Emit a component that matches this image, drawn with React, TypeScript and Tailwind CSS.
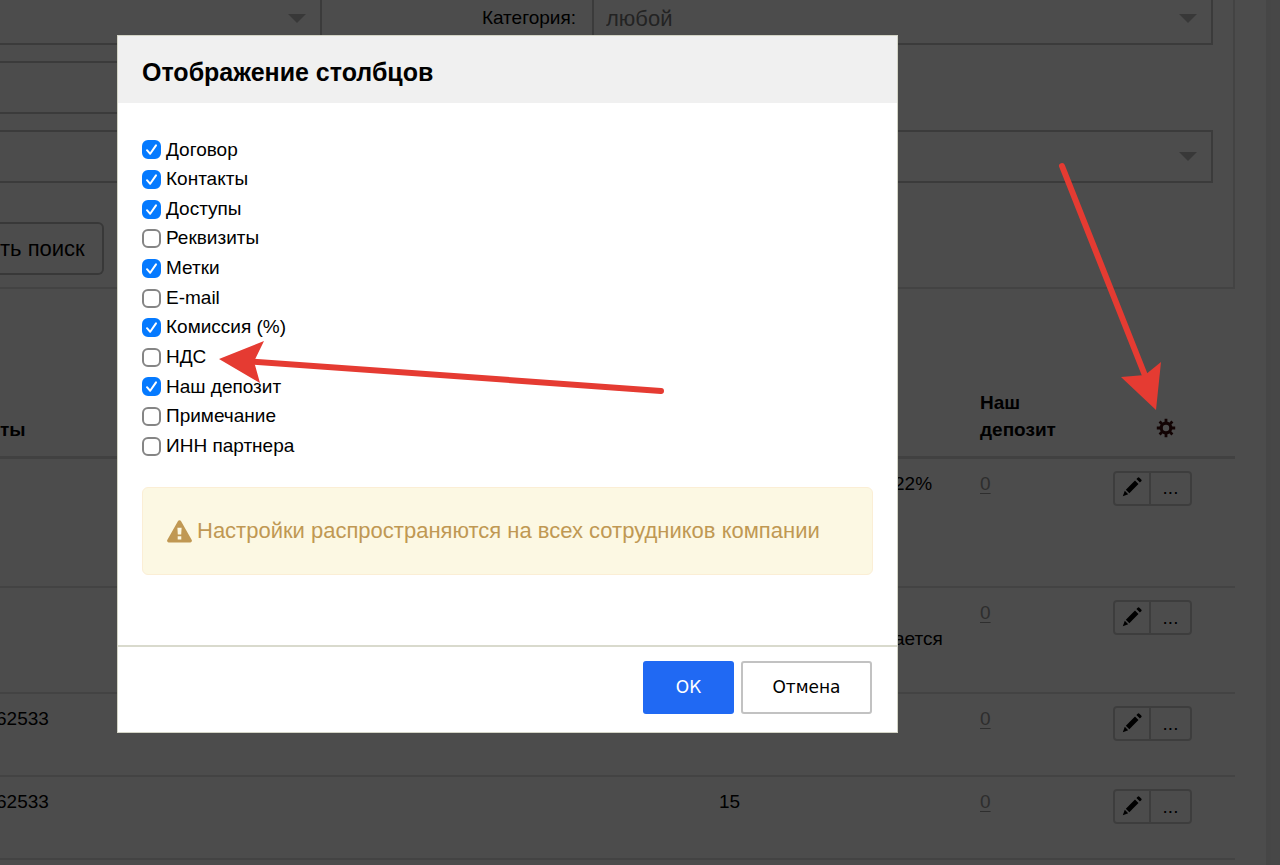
import { useState } from "react";
import type { ReactNode } from "react";

type Column = { id: string; label: string; checked: boolean };

const COLUMNS: Column[] = [
  { id: "contract", label: "Договор", checked: true },
  { id: "contacts", label: "Контакты", checked: true },
  { id: "access", label: "Доступы", checked: true },
  { id: "details", label: "Реквизиты", checked: false },
  { id: "tags", label: "Метки", checked: true },
  { id: "email", label: "E-mail", checked: false },
  { id: "commission", label: "Комиссия (%)", checked: true },
  { id: "vat", label: "НДС", checked: false },
  { id: "deposit", label: "Наш депозит", checked: true },
  { id: "note", label: "Примечание", checked: false },
  { id: "inn", label: "ИНН партнера", checked: false },
];

type Row = { phone: string; rate: string; note: string[]; height: string };

const ROWS: Row[] = [
  { phone: "", rate: "", note: ["22%"], height: "h-[130px]" },
  { phone: "", rate: "", note: ["", "ается"], height: "h-[106px]" },
  { phone: "62533", rate: "", note: [], height: "h-[83px]" },
  { phone: "62533", rate: "15", note: [], height: "h-[83px]" },
];

function PencilIcon() {
  return (
    <svg viewBox="0 0 20 20" className="size-5" fill="currentColor" aria-hidden="true">
      <path d="M14.400 2.100 15.700.8a1.200 1.200 0 0 1 1.700 0l1.800 1.800a1.200 1.200 0 0 1 0 1.700l-1.300 1.300z" />
      <path d="M13 3.500 16.500 7 7.300 16.200 3.800 12.700z" />
      <path d="M2.800 13.800 6.200 17.200.8 19.200z" />
    </svg>
  );
}

function GearIcon() {
  return (
    <svg viewBox="0 0 20 20" className="size-5" fill="none" stroke="currentColor" aria-hidden="true">
      <circle cx="10" cy="10" r="4.800" strokeWidth="3.200" />
      <path
        d="M10 .8v4M10 15.200v4M.8 10h4M15.200 10h4M3.600 3.600l2.600 2.600M13.800 13.800l2.600 2.600M3.600 16.400l2.600-2.600M13.800 6.200l2.600-2.600"
        strokeWidth="2.800"
      />
    </svg>
  );
}

function WarningIcon() {
  return (
    <svg viewBox="0 0 25 23" className="h-[23px] w-[25px] shrink-0" aria-hidden="true">
      <path
        fill="currentColor"
        fillRule="evenodd"
        d="M10.9 1.2a1.9 1.9 0 0 1 3.2 0l10.5 18.5a1.8 1.8 0 0 1-1.6 2.8H2a1.8 1.8 0 0 1-1.6-2.8zM10.4 7.7l.4 6.9h3.4l.4-6.9zM10.7 16.2v3.2h3.6v-3.2z"
      />
    </svg>
  );
}

function Caret() {
  return (
    <svg viewBox="0 0 18 9" className="h-[9px] w-[18px] shrink-0 text-[#bdbdbd]" fill="currentColor" aria-hidden="true">
      <path d="M0 0h18L9 9z" />
    </svg>
  );
}

function SelectBox({ label, value, className }: { label: string; value: string; className: string }) {
  return (
    <div className={`flex items-center border-[#c6c6c6] pr-[14px] pl-3 ${className}`}>
      <select aria-label={label} className="w-full flex-1 appearance-none bg-transparent text-[22px] text-[#777] outline-none">
        <option>{value}</option>
      </select>
      <Caret />
    </div>
  );
}

function Th({ children, className = "" }: { children?: ReactNode; className?: string }) {
  return <th className={`pb-[13px] text-left align-bottom font-bold ${className}`}>{children}</th>;
}

function PartnersPage() {
  return (
    <div className="mr-[14px] min-h-screen bg-white pr-[31px]">
      <form className="border-r-2 border-b-2 border-[#e2e2e2] pr-[20px] pb-3">
        <div className="flex">
          <SelectBox label="Статус" value="" className="h-[45px] w-[322px] border-r-2 border-b-2 pb-1.5" />
          <label className="flex flex-1 items-center justify-end pr-4 pb-2">Категория:</label>
          <SelectBox label="Категория" value="любой" className="h-[45px] w-[621px] border-r-2 border-b-2 border-l-2 pb-1.5" />
        </div>
        <div className="mt-4 w-[322px]">
          <input aria-label="Название" className="block h-[53px] w-full border-2 border-l-0 border-[#c6c6c6] bg-transparent" />
        </div>
        <SelectBox label="Метки" value="" className="mt-4 h-[53px] border-2 border-l-0" />
        <button
          type="button"
          className="mt-[39px] flex h-[53px] w-[104px] items-center rounded-r-md border-2 border-l-0 border-[#bcbcbc] text-[22px]"
        >
          ть поиск
        </button>
      </form>

      <table className="mt-[84px] w-full table-fixed border-collapse leading-[26px]">
        <thead>
          <tr className="h-[84px] border-b-3 border-[#dadada] leading-[27px]">
            <Th className="w-[719px]">ты</Th>
            <Th className="w-[175px]" />
            <Th className="w-[86px]" />
            <Th className="w-[133px]">
              Наш
              <br />
              депозит
            </Th>
            <Th>
              <button type="button" aria-label="Настроить столбцы" className="ml-[43px] block pb-[5px] text-[#3c0c0c]">
                <GearIcon />
              </button>
            </Th>
          </tr>
        </thead>
        <tbody>
          {ROWS.map((row, i) => (
            <tr key={i} className={`border-b-2 border-[#e2e2e2] align-top ${row.height}`}>
              <td className="pt-3">{row.phone && <span className="-ml-1">{row.phone}</span>}</td>
              <td className="pt-3">{row.rate}</td>
              <td className="pt-3">
                {row.note.map((line, n) => (
                  <div key={n} className="min-h-[26px]">
                    {line}
                  </div>
                ))}
              </td>
              <td className="pt-3">
                <a href="#deposit" className="text-[#999] underline underline-offset-3">
                  0
                </a>
              </td>
              <td className="pt-3">
                <div className="flex h-[35px] w-[79px] rounded border-2 border-[#cecece]">
                  <button type="button" aria-label="Редактировать" className="flex w-[36px] items-center justify-center border-r-2 border-[#cecece] pb-0.5">
                    <PencilIcon />
                  </button>
                  <button type="button" aria-label="Ещё" className="flex flex-1 items-center justify-center">
                    ...
                  </button>
                </div>
              </td>
            </tr>
          ))}
        </tbody>
      </table>
    </div>
  );
}

function ColumnOption({ column, onToggle }: { column: Column; onToggle: () => void }) {
  return (
    <li className="flex flex-1 items-center">
      <label className="flex items-center gap-[5px]">
        <span className="grid size-[19px]">
          <input
            type="checkbox"
            checked={column.checked}
            onChange={onToggle}
            className="peer col-start-1 row-start-1 size-[19px] appearance-none rounded-[6px] border-2 border-[#858585] bg-white checked:border-[#057aff] checked:bg-[#057aff]"
          />
          <svg
            viewBox="0 0 19 19"
            className="pointer-events-none invisible col-start-1 row-start-1 size-[19px] peer-checked:visible"
            fill="none"
            stroke="white"
            strokeWidth="2"
            strokeLinecap="round"
            strokeLinejoin="round"
            aria-hidden="true"
          >
            <path d="M5 10.2 8.2 13.8 14 5.4" />
          </svg>
        </span>
        {column.label}
      </label>
    </li>
  );
}

function ColumnsDialog() {
  const [columns, setColumns] = useState(COLUMNS);
  const toggle = (id: string) =>
    setColumns((list) => list.map((c) => (c.id === id ? { ...c, checked: !c.checked } : c)));

  return (
    <div role="dialog" aria-labelledby="dialog-title" className="w-[781px] max-w-full border border-[#d3d4c6] bg-white">
      <h2 id="dialog-title" className="bg-[#f0f0f0] px-6 pt-[22px] pb-[17px] text-[25px] leading-7 font-bold">
        Отображение столбцов
      </h2>
      <div className="px-6 pt-8 pb-[70px]">
        <ul className="flex h-[326px] flex-col">
          {columns.map((column) => (
            <ColumnOption key={column.id} column={column} onToggle={() => toggle(column.id)} />
          ))}
        </ul>
        <p className="mt-[26px] flex items-center gap-[5px] rounded-md border border-[#fbeed5] bg-[#fcf8e3] px-6 py-7 text-[22px] leading-[30px] text-[#c09853]">
          <WarningIcon />
          Настройки распространяются на всех сотрудников компании
        </p>
      </div>
      <div className="flex justify-end gap-[7px] border-t-2 border-[#d9dacd] px-[25px] pt-[14px] pb-[18px] font-['DejaVu_Sans',Verdana,sans-serif] text-[17px]">
        <button type="button" className="h-[53px] w-[91px] rounded-[3px] bg-[#2069f3] text-white">
          ОК
        </button>
        <button type="button" className="h-[53px] w-[131px] rounded-[3px] border-2 border-[#c2c2c2] bg-white">
          Отмена
        </button>
      </div>
    </div>
  );
}

function Arrows() {
  return (
    <svg
      viewBox="0 0 1280 865"
      className="pointer-events-none absolute top-0 left-0 h-[865px] w-[1280px]"
      fill="#e53b32"
      stroke="#e53b32"
      strokeWidth="6"
      strokeLinecap="round"
      aria-hidden="true"
    >
      <path d="M661 391 252 361.500" />
      <path d="M219 359 264 341 254 361.500 260 383z" stroke="none" />
      <path d="M1062 166 1146 378" />
      <path d="M1156 410 1161 362 1145 375 1121 377z" stroke="none" />
    </svg>
  );
}

export default function App() {
  return (
    <div className="relative min-h-screen overflow-hidden bg-[#ececec] font-['Liberation_Sans',Arial,sans-serif] text-[19px] text-black">
      <PartnersPage />
      <div className="absolute inset-0 bg-black/70 pt-[35px] pl-[117px]">
        <ColumnsDialog />
      </div>
      <Arrows />
    </div>
  );
}
